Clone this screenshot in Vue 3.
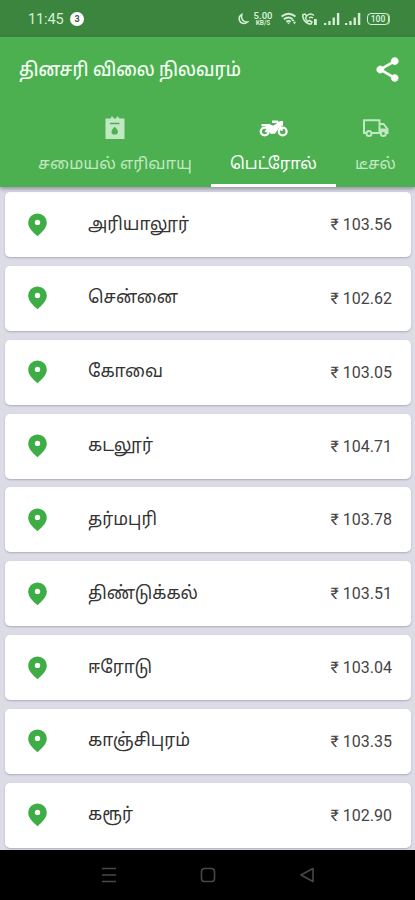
<script setup>
const rows = [
  { city: 'அரியாலூர்', price: '103.56', w: 101 },
  { city: 'சென்னை', price: '102.62', w: 90 },
  { city: 'கோவை', price: '103.05', w: 75 },
  { city: 'கடலூர்', price: '104.71', w: 65 },
  { city: 'தர்மபுரி', price: '103.78', w: 69 },
  { city: 'திண்டுக்கல்', price: '103.51', w: 110 },
  { city: 'ஈரோடு', price: '103.04', w: 64 },
  { city: 'காஞ்சிபுரம்', price: '103.35', w: 102 },
  { city: 'கரூர்', price: '102.90', w: 45 },
]
</script>

<template>
  <div class="screen">
    <div class="status">
      <span class="time">11:45</span>
      <span class="count">3</span>
      <div class="indicators">
        <svg class="moon" width="11" height="14" viewBox="0 0 11 14"><path d="M3.800 2.500C1.800 3.600.800 5.800 1.300 8c.9 3.600 5.400 4.600 8.200 2C5.800 10.400 2.600 7.200 3.800 2.500Z" fill="none" stroke="currentColor" stroke-width="1.500" /></svg>
        <span class="speed"><b>5.00</b><i>KB/S</i></span>
        <svg class="wifi" width="16" height="14" viewBox="0 0 16 14"><path d="M.500 4.500Q7.500 -1 14.500 4.500M2.800 7.200Q7.500 3.700 11.500 7.200M5.300 9.700Q7.500 8.200 9.700 9.700" fill="none" stroke="currentColor" stroke-width="1.900" /><path d="M6 10.700l1.500 1.600L9 10.700zM10.500 9l1.500-2.200L13.500 9zM12 9.800h3L13.500 12.500z" fill="currentColor" /></svg>
        <svg class="call" width="17" height="14" viewBox="0 0 17 14"><path d="M2 2.500C1 7 5 12 10 12l1-2-2.500-1.500L7 9.500Q4.700 8 4.500 5.500L5.700 4 4 2Z" fill="none" stroke="currentColor" stroke-width="1.500" /><path d="M6 3.500q3.500-3 7 0M8 6q2-1.500 4 0" fill="none" stroke="currentColor" stroke-width="1.500" /><path d="M13 7h2.800v6H13z" fill="currentColor" /></svg>
        <svg v-for="n in 2" :key="n" class="signal" width="16" height="14" viewBox="0 0 16 14"><path d="M0 11h2.300v2H0zM4.300 9h2.300v4H4.300zM8.600 5.500h2.300V13H8.600zM12.900 1h2.400v12h-2.400z" fill="currentColor" /></svg>
        <span class="battery">100</span>
      </div>
    </div>
    <header>
      <div class="bar">
        <svg class="fit" width="222" height="36"><text x="0" y="24" textLength="222" lengthAdjust="spacingAndGlyphs" class="title">தினசரி விலை நிலவரம்</text></svg>
        <svg class="share" width="29" height="29" viewBox="0 0 24 24"><path fill="currentColor" stroke="currentColor" stroke-width=".4" d="M18 16.080c-.76 0-1.440.3-1.960.77L8.910 12.700c.05-.23.09-.46.09-.7s-.04-.47-.09-.7l7.050-4.110c.54.5 1.250.81 2.040.81 1.660 0 3-1.340 3-3s-1.340-3-3-3-3 1.340-3 3c0 .24.04.47.09.7L8.040 9.810C7.500 9.310 6.790 9 6 9c-1.660 0-3 1.340-3 3s1.340 3 3 3c.79 0 1.500-.31 2.040-.81l7.120 4.160c-.05.21-.08.43-.08.65 0 1.610 1.310 2.920 2.920 2.920s2.920-1.310 2.920-2.920-1.310-2.920-2.920-2.920z" /></svg>
      </div>
      <nav class="tabs">
        <div class="tab gas">
          <svg class="icon" width="20" height="24" viewBox="0 0 20 24"><path fill="currentColor" fill-rule="evenodd" d="M.500 2.500H5.500L7 0l2 2.500h2L12.500 0l2 2.500h5V23H.500zM5 6.700V8.300h9.500V6.700zM9.700 10.700Q6.500 14 6.500 15.400a3.200 3.200 0 0 0 6.400 0Q12.900 14 9.700 10.700Z" /></svg>
          <svg class="fit" width="154" height="30"><text x="0" y="21" textLength="154" lengthAdjust="spacingAndGlyphs" class="label">சமையல் எரிவாயு</text></svg>
        </div>
        <div class="tab active">
          <svg class="icon" width="30" height="24" viewBox="0 0 30 24"><g fill="none" stroke="currentColor"><circle cx="5.700" cy="15.500" r="3.900" stroke-width="2.300" /><circle cx="23.700" cy="15.500" r="3.900" stroke-width="2.300" /><path d="M13 5.700h5.200l5 9" stroke-width="2.500" /></g><path fill="currentColor" d="M2.500 8h8l3.500 1.700L18.500 7l2.500-2h3v4.700h-2.500L16 17.800h-4.500L10 14.500l-3 2.200-1.300-1.700 3-3-2.200-1.800h-4z" /></svg>
          <svg class="fit" width="87" height="30"><text x="0" y="21" textLength="87" lengthAdjust="spacingAndGlyphs" class="label">பெட்ரோல்</text></svg>
        </div>
        <div class="tab diesel">
          <svg class="icon" width="28" height="24" viewBox="0 0 28 24"><g fill="none" stroke="currentColor" stroke-width="2"><path d="M4 17H2V4.200h15.500V17H10M17.500 8h4l4 5V17h-1.500M19 17h-2" /><circle cx="7" cy="17.500" r="2.500" /><circle cx="21.300" cy="17.500" r="2.500" /></g><path fill="currentColor" d="M18 12.500h7l1 1.500v2h-8z" /></svg>
          <svg class="fit" width="42" height="30"><text x="0" y="21" textLength="41" lengthAdjust="spacingAndGlyphs" class="label">டீசல்</text></svg>
        </div>
      </nav>
    </header>
    <main>
      <div v-for="r in rows" :key="r.city" class="card">
        <svg class="pin" width="19" height="24" viewBox="0 0 19 24"><path fill="currentColor" fill-rule="evenodd" d="M9.500.500A9.200 9.200 0 0 0 .200 9.600C.200 15 4.500 18.800 9.500 23.300 14.500 18.800 18.800 15 18.800 9.600A9.200 9.200 0 0 0 9.500.500ZM9.500 6.700a2.700 2.700 0 1 1 0 5.400 2.700 2.700 0 0 1 0-5.400Z" /></svg>
        <svg class="fit" :width="r.w" height="36"><text x="0" y="23" :textLength="r.w" lengthAdjust="spacingAndGlyphs" class="city">{{ r.city }}</text></svg>
        <span class="price">₹ {{ r.price }}</span>
      </div>
    </main>
    <footer>
      <svg width="16" height="18" viewBox="0 0 16 18"><path d="M1 2.500h14M1 9h14M1 15.500h14" /></svg>
      <svg width="16" height="18" viewBox="0 0 16 18"><rect x="1.500" y="2.500" width="13" height="13" rx="3" /></svg>
      <svg width="16" height="18" viewBox="0 0 16 18"><path d="M14 2.500v13L2 9z" stroke-linejoin="round" /></svg>
    </footer>
  </div>
</template>

<style>
body { margin: 0; overflow: hidden; }
</style>

<style scoped>
.screen { width: 415px; height: 900px; overflow: hidden; display: flex; flex-direction: column; background: #dcdce7; font-family: Roboto, "Noto Sans Tamil", "Noto Sans", sans-serif; }
svg { display: block; flex-shrink: 0; }
.fit { overflow: visible; }
.status { height: 37px; flex-shrink: 0; box-sizing: border-box; padding: 1px 26px 0 28px; display: flex; align-items: center; background: #3b853e; color: #d5efd5; }
.time { width: 42px; font-size: 14.500px; letter-spacing: -.1px; }
.count { width: 14px; height: 14px; border-radius: 50%; background: #fff; color: #4b554b; font-size: 9px; font-weight: 700; line-height: 14px; text-align: center; }
.indicators { margin-left: auto; display: flex; align-items: center; }
.speed { width: 20px; margin: 0 8px 0 4px; display: flex; flex-direction: column; align-items: center; }
.speed b { font-size: 9.500px; line-height: 8px; font-weight: 600; }
.speed i { font-size: 6.500px; line-height: 7px; font-style: normal; font-weight: 700; }
.wifi { margin-right: 4px; }
.call { margin-right: 6px; }
.signal { margin-right: 5px; }
.signal + .battery { margin-left: 1px; }
.battery { box-sizing: border-box; width: 22px; height: 12px; border: 1.500px solid currentColor; border-radius: 4px; font-size: 8.500px; line-height: 10px; font-weight: 600; text-align: center; box-shadow: 1px 0 0 -0.200px currentColor; }
header { height: 150px; flex-shrink: 0; background: #4caf50; color: #fff; box-shadow: 0 2px 4px rgba(60, 50, 80, .45); z-index: 1; }
.bar { height: 65px; box-sizing: border-box; padding: 0 13px 0 19px; display: flex; align-items: center; justify-content: space-between; }
.title { font-size: 19px; font-weight: 500; fill: #f2fff2; }
.tabs { height: 85px; display: flex; }
.tab { box-sizing: border-box; height: 85px; padding-top: 14px; display: flex; flex-direction: column; align-items: center; color: #c0e8c1; }
.gas { width: 211px; padding-left: 18px; }
.active { width: 125px; color: #fff; border-bottom: 3px solid #fff; }
.diesel { width: 79px; }
.label { font-size: 16px; fill: currentColor; }
.tab .fit { margin-top: 8px; }
main { flex: 1; min-height: 0; overflow: hidden; padding: 5px 4px 0 5px; display: flex; flex-direction: column; gap: 8.850px; }
.card { height: 65px; flex-shrink: 0; box-sizing: border-box; padding: 0 19px 0 23px; border-radius: 5px; background: #fff; box-shadow: 0 1px 2px rgba(70, 60, 90, .3); display: flex; align-items: center; }
.pin { color: #3fad46; margin-right: 41px; }
.city { font-size: 18px; fill: #333; }
.price { margin-left: auto; font-size: 16px; color: #444; }
footer { height: 50px; flex-shrink: 0; box-sizing: border-box; padding: 0 100px 0 101px; display: flex; align-items: center; justify-content: space-between; background: #000; z-index: 1; }
footer path, footer rect { fill: none; stroke: #484848; stroke-width: 1.600; }
</style>
